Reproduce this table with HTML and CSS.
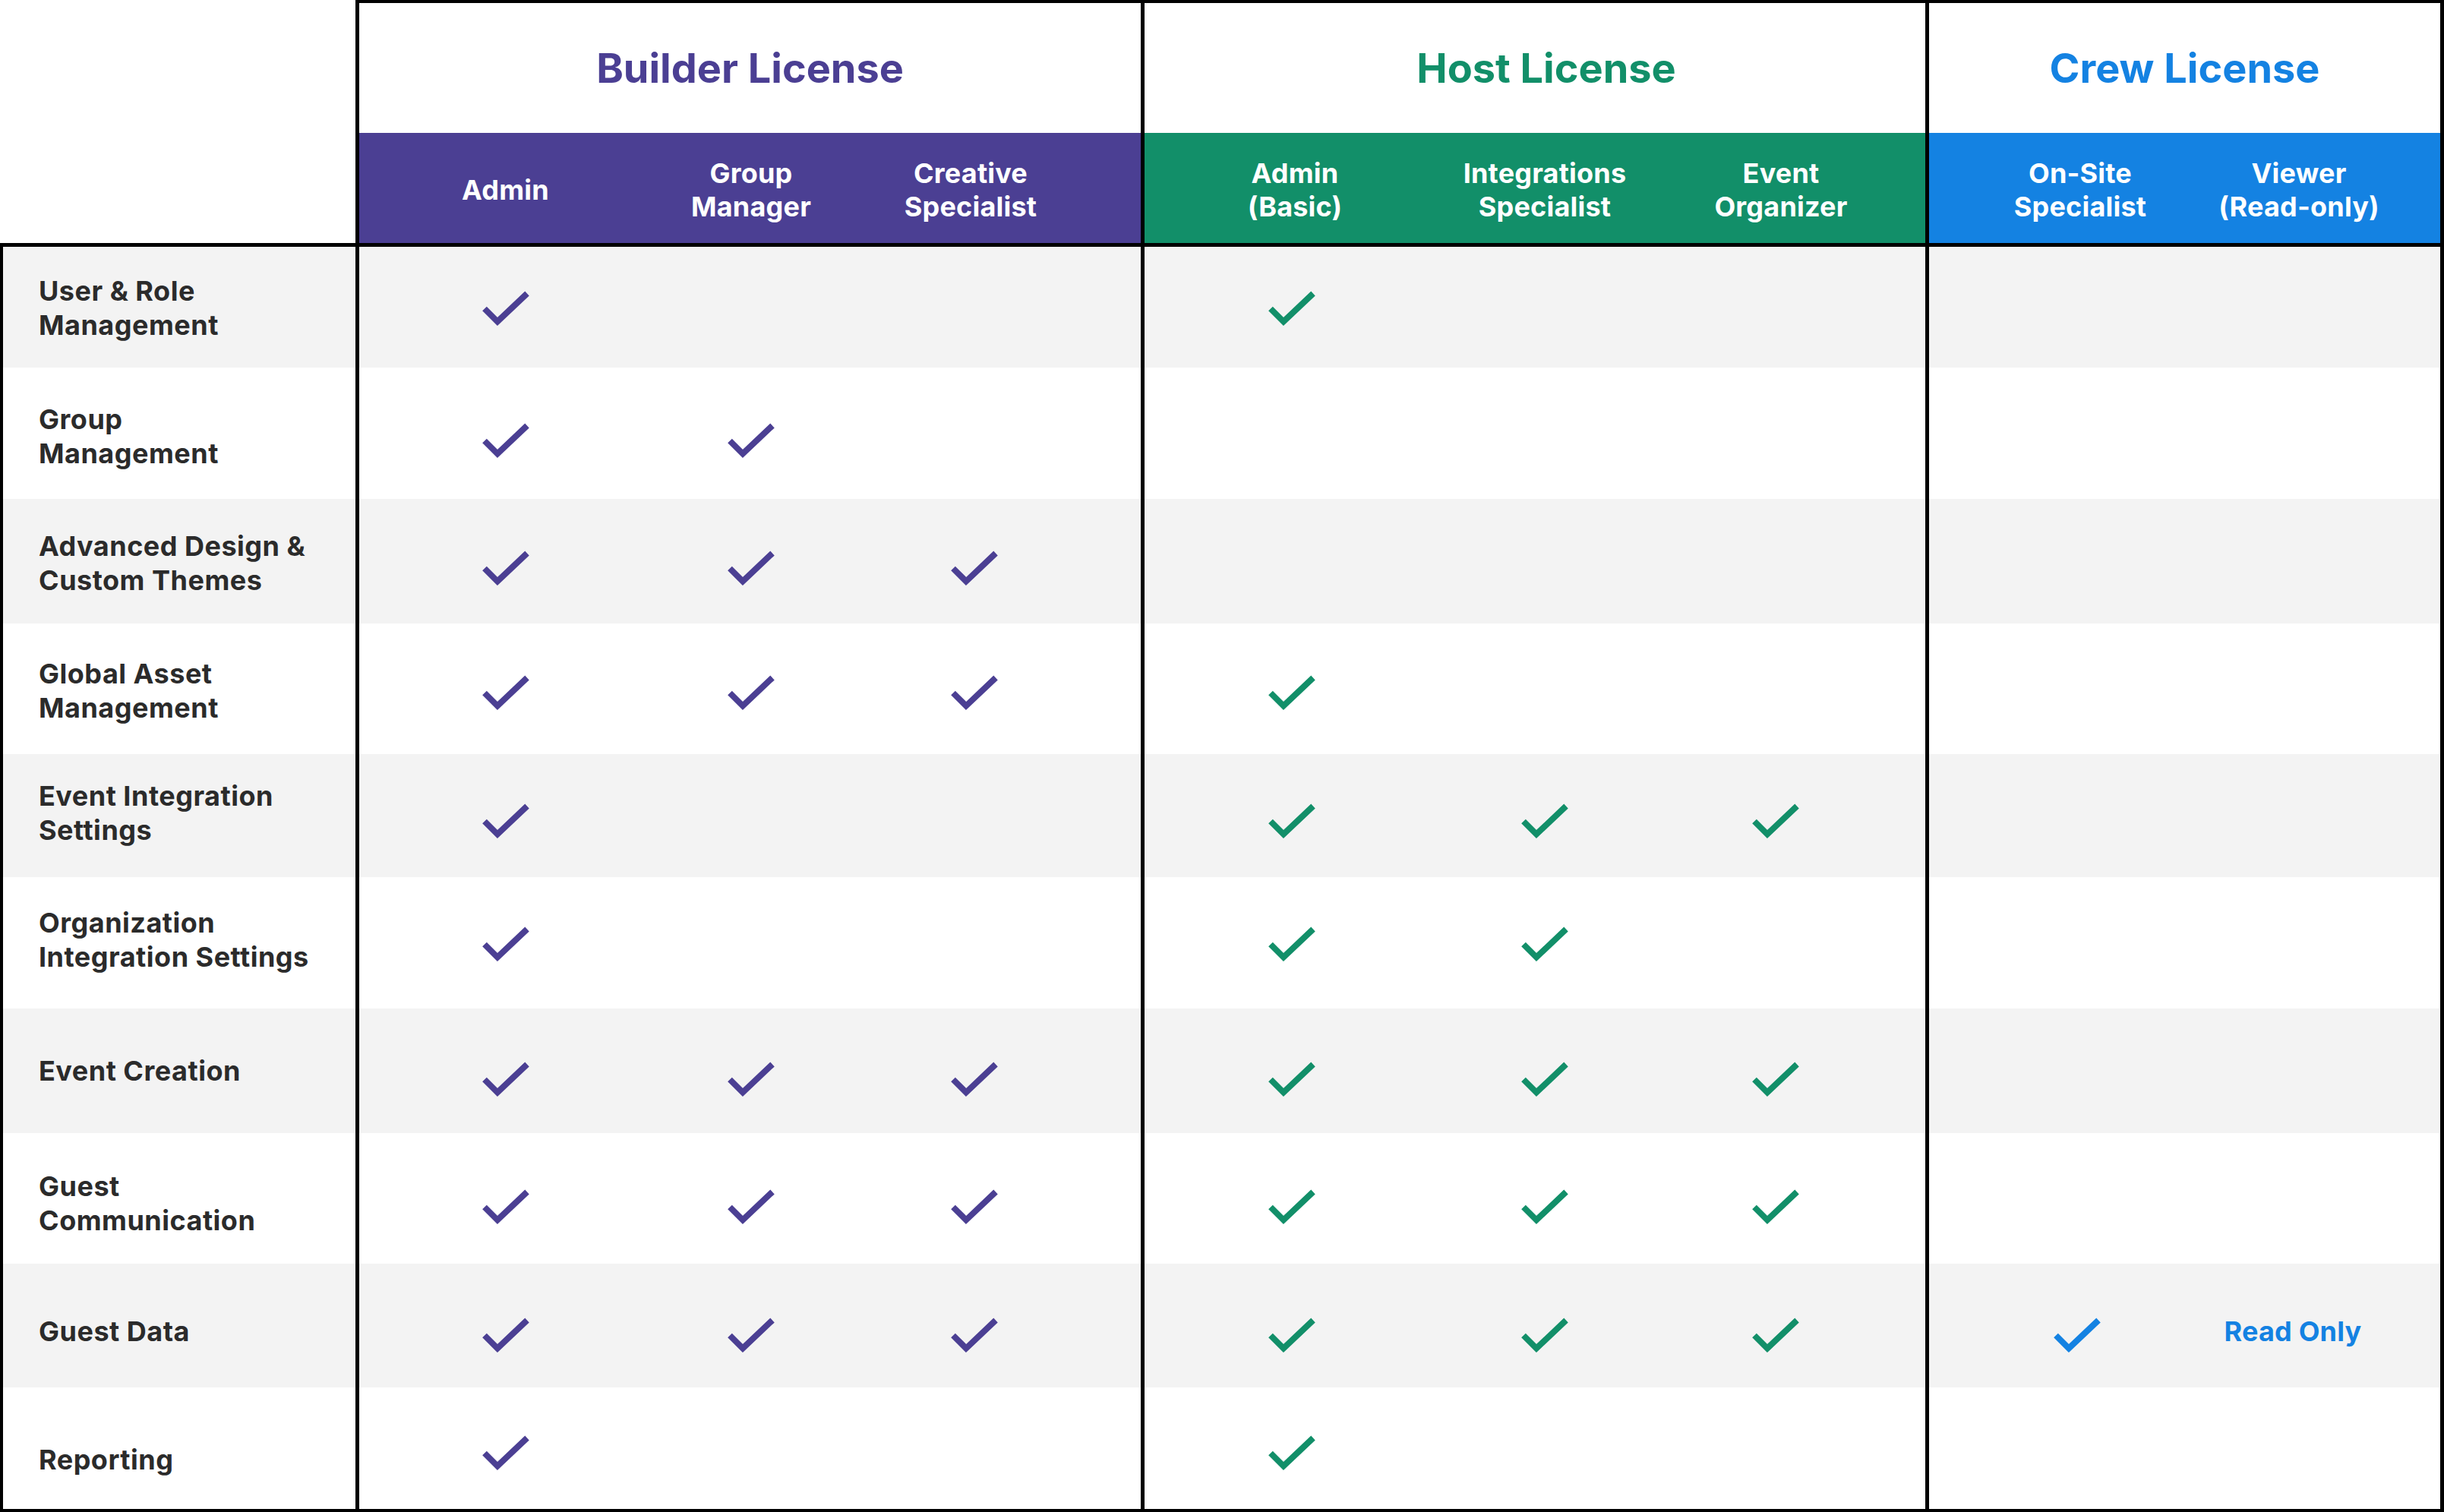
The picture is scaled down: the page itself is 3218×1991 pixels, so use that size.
FILE: index.html
```html
<!DOCTYPE html>
<html lang="en">
<head>
<meta charset="utf-8">
<title>License Roles Matrix</title>
<link rel="stylesheet" href="styles.css">
</head>
<body>
<svg width="0" height="0" class="defs" aria-hidden="true">
  <defs>
    <symbol id="chk" viewBox="0 0 64 48">
      <polyline points="4,23.5 21,40.5 60,3.5" fill="none" stroke="currentColor" stroke-width="8" stroke-linejoin="miter" stroke-linecap="butt"/>
    </symbol>
  </defs>
</svg>
<div class="matrix">
  <div class="head">
    <div class="corner"></div>
    <div class="sec builder">
      <div class="title">Builder License</div>
      <div class="band">
        <div class="hc">Admin</div>
        <div class="hc">Group<br>Manager</div>
        <div class="hc">Creative<br>Specialist</div>
      </div>
    </div>
    <div class="sec host">
      <div class="title">Host License</div>
      <div class="band">
        <div class="hc">Admin<br>(Basic)</div>
        <div class="hc">Integrations<br>Specialist</div>
        <div class="hc">Event<br>Organizer</div>
      </div>
    </div>
    <div class="sec crew">
      <div class="title">Crew License</div>
      <div class="band">
        <div class="hc">On-Site<br>Specialist</div>
        <div class="hc">Viewer<br>(Read-only)</div>
      </div>
    </div>
  </div>

  <div class="body">
    <div class="row alt r1">
      <div class="label">User &amp; Role<br>Management</div>
      <div class="grp builder"><div class="c"><svg class="ck"><use href="#chk"/></svg></div><div class="c"></div><div class="c"></div></div>
      <div class="grp host"><div class="c"><svg class="ck"><use href="#chk"/></svg></div><div class="c"></div><div class="c"></div></div>
      <div class="grp crew"><div class="c"></div><div class="c"></div></div>
    </div>
    <div class="row r2">
      <div class="label">Group<br>Management</div>
      <div class="grp builder"><div class="c"><svg class="ck"><use href="#chk"/></svg></div><div class="c"><svg class="ck"><use href="#chk"/></svg></div><div class="c"></div></div>
      <div class="grp host"><div class="c"></div><div class="c"></div><div class="c"></div></div>
      <div class="grp crew"><div class="c"></div><div class="c"></div></div>
    </div>
    <div class="row alt r3">
      <div class="label">Advanced Design &amp;<br>Custom Themes</div>
      <div class="grp builder"><div class="c"><svg class="ck"><use href="#chk"/></svg></div><div class="c"><svg class="ck"><use href="#chk"/></svg></div><div class="c"><svg class="ck"><use href="#chk"/></svg></div></div>
      <div class="grp host"><div class="c"></div><div class="c"></div><div class="c"></div></div>
      <div class="grp crew"><div class="c"></div><div class="c"></div></div>
    </div>
    <div class="row r4">
      <div class="label">Global Asset<br>Management</div>
      <div class="grp builder"><div class="c"><svg class="ck"><use href="#chk"/></svg></div><div class="c"><svg class="ck"><use href="#chk"/></svg></div><div class="c"><svg class="ck"><use href="#chk"/></svg></div></div>
      <div class="grp host"><div class="c"><svg class="ck"><use href="#chk"/></svg></div><div class="c"></div><div class="c"></div></div>
      <div class="grp crew"><div class="c"></div><div class="c"></div></div>
    </div>
    <div class="row alt r5">
      <div class="label">Event Integration<br>Settings</div>
      <div class="grp builder"><div class="c"><svg class="ck"><use href="#chk"/></svg></div><div class="c"></div><div class="c"></div></div>
      <div class="grp host"><div class="c"><svg class="ck"><use href="#chk"/></svg></div><div class="c"><svg class="ck"><use href="#chk"/></svg></div><div class="c"><svg class="ck"><use href="#chk"/></svg></div></div>
      <div class="grp crew"><div class="c"></div><div class="c"></div></div>
    </div>
    <div class="row r6">
      <div class="label">Organization<br>Integration Settings</div>
      <div class="grp builder"><div class="c"><svg class="ck"><use href="#chk"/></svg></div><div class="c"></div><div class="c"></div></div>
      <div class="grp host"><div class="c"><svg class="ck"><use href="#chk"/></svg></div><div class="c"><svg class="ck"><use href="#chk"/></svg></div><div class="c"></div></div>
      <div class="grp crew"><div class="c"></div><div class="c"></div></div>
    </div>
    <div class="row alt r7">
      <div class="label">Event Creation</div>
      <div class="grp builder"><div class="c"><svg class="ck"><use href="#chk"/></svg></div><div class="c"><svg class="ck"><use href="#chk"/></svg></div><div class="c"><svg class="ck"><use href="#chk"/></svg></div></div>
      <div class="grp host"><div class="c"><svg class="ck"><use href="#chk"/></svg></div><div class="c"><svg class="ck"><use href="#chk"/></svg></div><div class="c"><svg class="ck"><use href="#chk"/></svg></div></div>
      <div class="grp crew"><div class="c"></div><div class="c"></div></div>
    </div>
    <div class="row r8">
      <div class="label">Guest<br>Communication</div>
      <div class="grp builder"><div class="c"><svg class="ck"><use href="#chk"/></svg></div><div class="c"><svg class="ck"><use href="#chk"/></svg></div><div class="c"><svg class="ck"><use href="#chk"/></svg></div></div>
      <div class="grp host"><div class="c"><svg class="ck"><use href="#chk"/></svg></div><div class="c"><svg class="ck"><use href="#chk"/></svg></div><div class="c"><svg class="ck"><use href="#chk"/></svg></div></div>
      <div class="grp crew"><div class="c"></div><div class="c"></div></div>
    </div>
    <div class="row alt r9">
      <div class="label">Guest Data</div>
      <div class="grp builder"><div class="c"><svg class="ck"><use href="#chk"/></svg></div><div class="c"><svg class="ck"><use href="#chk"/></svg></div><div class="c"><svg class="ck"><use href="#chk"/></svg></div></div>
      <div class="grp host"><div class="c"><svg class="ck"><use href="#chk"/></svg></div><div class="c"><svg class="ck"><use href="#chk"/></svg></div><div class="c"><svg class="ck"><use href="#chk"/></svg></div></div>
      <div class="grp crew"><div class="c"><svg class="ck"><use href="#chk"/></svg></div><div class="c"><span class="ro">Read Only</span></div></div>
    </div>
    <div class="row r10">
      <div class="label">Reporting</div>
      <div class="grp builder"><div class="c"><svg class="ck"><use href="#chk"/></svg></div><div class="c"></div><div class="c"></div></div>
      <div class="grp host"><div class="c"><svg class="ck"><use href="#chk"/></svg></div><div class="c"></div><div class="c"></div></div>
      <div class="grp crew"><div class="c"></div><div class="c"></div></div>
    </div>
  </div>
</div>
</body>
</html>
```

FILE: styles.css
```css
* { box-sizing: border-box; }

html, body {
  margin: 0;
  padding: 0;
  background: #ffffff;
}

body {
  font-family: "Inter", "Lato", "Liberation Sans", sans-serif;
  font-weight: 700;
  color: #2b2b2b;
  width: 3218px;
  height: 1991px;
  overflow: hidden;
}

.defs { position: absolute; }

.matrix {
  width: 3218px;
}

/* ---------- header ---------- */
.head {
  display: grid;
  grid-template-columns: 468px 1034px 1033px 683px;
  height: 325px;
  border-bottom: 5px solid #000;
}

.sec {
  display: flex;
  flex-direction: column;
  border-left: 5px solid #000;
  border-top: 4px solid #000;
}

.sec.crew { border-right: 5px solid #000; }

.title {
  height: 171px;
  display: flex;
  align-items: center;
  justify-content: center;
  font-size: 54px;
  letter-spacing: 0;
}

.host .title { padding-left: 30px; }

.band {
  flex: 1;
  display: grid;
  align-items: center;
  padding-top: 5px;
  color: #fff;
  font-size: 36px;
  line-height: 44px;
  letter-spacing: 0.2px;
  text-align: center;
}

.hc {
  display: flex;
  justify-content: center;
  white-space: nowrap;
}

/* small horizontal nudges of individual header labels */
.builder .hc:nth-child(3) { padding-right: 4px; }
.host .hc:nth-child(1)    { padding-left: 8px; }
.host .hc:nth-child(3)    { padding-left: 12px; }
.crew .hc:nth-child(1)    { padding-left: 8px; }

.builder .title { color: #4b3f93; }
.host .title    { color: #128f69; }
.crew .title    { color: #1482e2; }

.builder .band { background: #4b3f93; }
.host .band    { background: #128f69; }
.crew .band    { background: #1482e2; }

/* sub-column tracks shared by header band and body groups */
.builder .band, .grp.builder { grid-template-columns: 385px 262px 320px; }
.host .band,    .grp.host    { grid-template-columns: 388px 278px 332px; }
.crew .band,    .grp.crew    { grid-template-columns: 390px 194px; }

/* ---------- body ---------- */
.body {
  border-left: 4px solid #000;
  border-bottom: 4px solid #000;
}

.row {
  display: grid;
  grid-template-columns: 464px 1034px 1033px 683px;
  background: #fff;
}

.row.alt { background: #f3f3f3; }

.r1  { height: 159px; }
.r2  { height: 173px; }
.r3  { height: 164px; }
.r4  { height: 172px; }
.r5  { height: 162px; }
.r6  { height: 173px; }
.r7  { height: 164px; }
.r8  { height: 172px; }
.r9  { height: 163px; }
.r10 { height: 160px; }

.label {
  display: flex;
  align-items: center;
  padding-left: 47px;
  font-size: 36px;
  line-height: 45px;
  letter-spacing: 0.5px;
  color: #2b2b2b;
}

/* per-row vertical nudge of the labels */
.r1 .label  { padding-top: 3px; }
.r2 .label  { padding-top: 8px; }
.r3 .label  { padding-top: 5px; }
.r4 .label  { padding-top: 6px; }
.r5 .label  { padding-bottom: 7px; }
.r6 .label  { padding-bottom: 7px; }
.r8 .label  { padding-top: 13px; }
.r9 .label  { padding-top: 16px; }
.r10 .label { padding-top: 30px; }

.grp {
  display: grid;
  align-items: stretch;
  border-left: 5px solid #000;
}

.grp.crew { border-right: 5px solid #000; }

.c {
  display: flex;
  align-items: center;
  justify-content: center;
}

.grp.builder .c:nth-child(3) { padding-left: 6px; }
.grp.host .c:nth-child(3)    { padding-right: 2px; }

/* per-row vertical nudge of the marks */
.r1 .c  { padding-top: 4px; }
.r2 .c  { padding-top: 20px; }
.r3 .c  { padding-top: 20px; }
.r4 .c  { padding-top: 12px; }
.r5 .c  { padding-top: 16px; }
.r6 .c  { padding-top: 4px; }
.r7 .c  { padding-top: 24px; }
.r8 .c  { padding-top: 24px; }
.r9 .c  { padding-top: 26px; }
.r10 .c { padding-top: 14px; }

.ck {
  width: 64px;
  height: 48px;
  display: block;
}

.builder .ck { color: #4b3f93; }
.host .ck    { color: #128f69; }
.crew .ck    { color: #1482e2; }

.ro {
  color: #1482e2;
  font-size: 36px;
  letter-spacing: 0.2px;
  white-space: nowrap;
  margin-top: -12px;
  margin-right: 16px;
}
```
